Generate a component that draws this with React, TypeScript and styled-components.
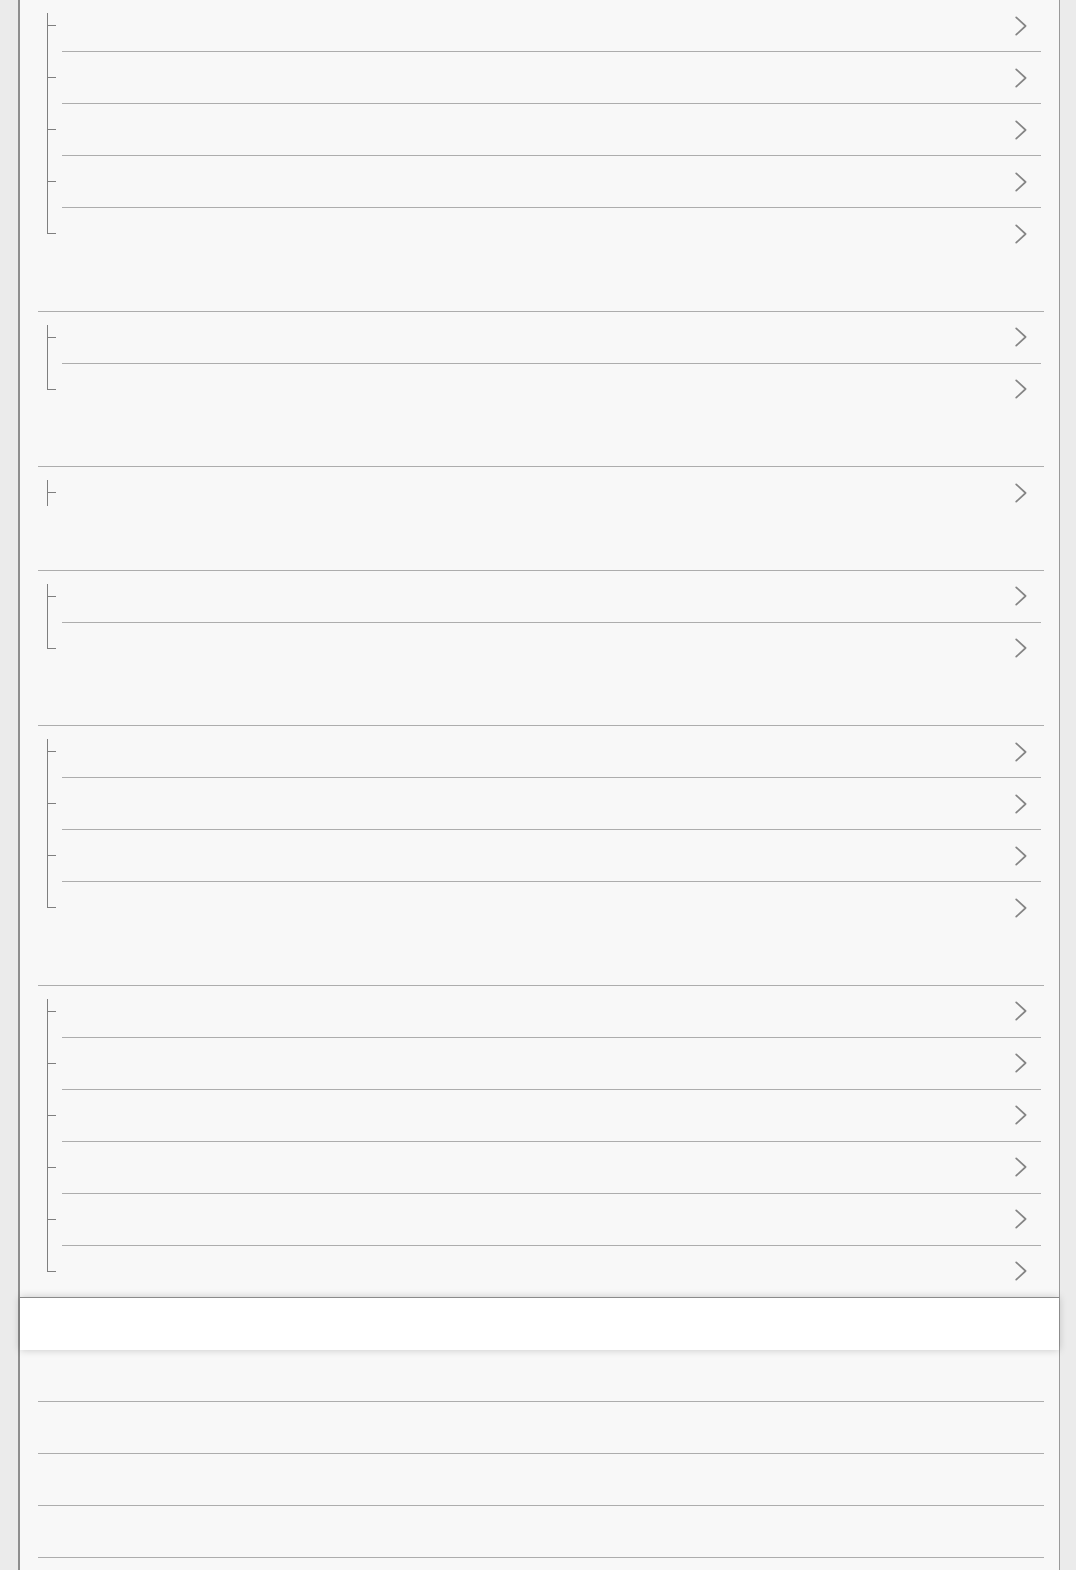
import React from "react";
import styled, { createGlobalStyle } from "styled-components";

type Pos = "first" | "middle" | "last" | "only";

// 트리 그룹 (항목 수)
const groups = [5, 2, 1, 2, 4, 6];
const listRows = 5;

function posOf(index: number, count: number): Pos {
  if (count === 1) return "only";
  if (index === 0) return "first";
  if (index === count - 1) return "last";
  return "middle";
}

function Chevron() {
  return (
    <ChevronIcon width="12" height="20" viewBox="0 0 12 20" aria-hidden>
      <path d="M1.2 1.4 L10.6 10 L1.2 18.6" />
    </ChevronIcon>
  );
}

export default function App() {
  return (
    <>
      <GlobalStyle />
      <Panel>
        {groups.map((count, g) => (
          <Group key={g} $last={g === groups.length - 1}>
            {Array.from({ length: count }).map((_, i) => (
              <Row key={i}>
                <Tree $pos={posOf(i, count)} />
                <RowBody $first={i === 0}>
                  <Chevron />
                </RowBody>
              </Row>
            ))}
          </Group>
        ))}
        <SectionHeader />
        <List>
          {Array.from({ length: listRows }).map((_, i) => (
            <ListRow key={i} />
          ))}
        </List>
      </Panel>
    </>
  );
}

const GlobalStyle = createGlobalStyle`
  html, body {
    margin: 0;
    padding: 0;
    background: #ebebeb;
    font-family: "Liberation Sans", Arial, sans-serif;
  }
  body {
    overflow: hidden;
  }
`;

const Panel = styled.div`
  margin-left: 18px;
  width: 1039px;
  min-height: 1570px;
  background: #f8f8f8;
  border-left: 2px solid #8e8e8e;
  border-right: 1px solid #9a9a9a;
`;

const Group = styled.div<{ $last: boolean }>`
  margin: 0 15px 0 18px;
  padding: 0 3px ${(p) => (p.$last ? "0" : "51.5px")} 9px;
  border-bottom: ${(p) => (p.$last ? "none" : "1px solid #adadad")};
`;

const Row = styled.div`
  display: flex;
`;

const line = "linear-gradient(#7f7f7f, #7f7f7f)";

// 세로줄: 첫 항목은 눈금 12px 위에서 시작, 마지막 항목은 눈금에서 끝남
const stem: Record<Pos, { size: string; at: string }> = {
  first: { size: "1px 38px", at: "left bottom" },
  middle: { size: "1px 100%", at: "left top" },
  last: { size: "1px calc(100% - 25px)", at: "left top" },
  only: { size: "1px 26px", at: "left bottom 12px" },
};

const Tree = styled.div<{ $pos: Pos }>`
  flex: none;
  width: 15px;
  background-image: ${line}, ${line};
  background-repeat: no-repeat;
  background-size: 9px 1px, ${(p) => stem[p.$pos].size};
  background-position: left bottom 25px, ${(p) => stem[p.$pos].at};
`;

const RowBody = styled.div<{ $first: boolean }>`
  flex: 1;
  height: 51px;
  display: flex;
  align-items: center;
  justify-content: flex-end;
  padding-right: 14px;
  border-top: ${(p) => (p.$first ? "none" : "1px solid #adadad")};
`;

const ChevronIcon = styled.svg`
  display: block;
  fill: none;
  stroke: #858585;
  stroke-width: 1.7;
  stroke-linecap: round;
  stroke-linejoin: round;
`;

const SectionHeader = styled.div`
  position: relative;
  height: 52px;
  background: #fff;
  border-top: 1px solid #8a8a8a;
  box-shadow: 0 0 8px rgba(0, 0, 0, 0.2);
`;

const List = styled.div`
  margin: 0 15px 0 18px;
`;

const ListRow = styled.div`
  height: 51px;
  border-bottom: 1px solid #adadad;
`;
